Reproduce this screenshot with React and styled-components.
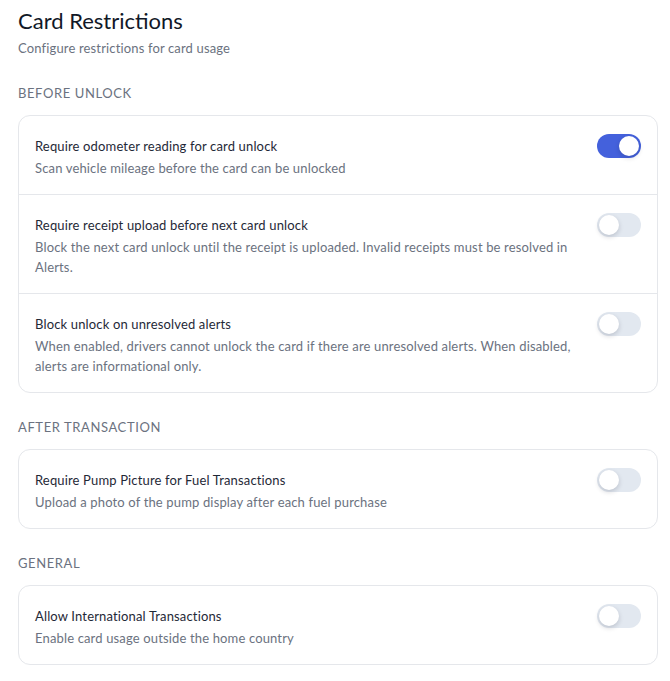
import React, { useState } from 'react';
import styled, { createGlobalStyle } from 'styled-components';

const GlobalStyle = createGlobalStyle`
  * { box-sizing: border-box; }
  body {
    margin: 0;
    background: #ffffff;
    font-family: Lato, "Noto Sans", sans-serif;
    color: #111827;
  }
`;

const Page = styled.div`
  padding: 6px 12px 16px 18px;
`;

const Title = styled.h1`
  margin: 0;
  font-size: 22px;
  line-height: 30px;
  font-weight: 400;
  color: #111827;
`;

const Subtitle = styled.p`
  margin: 2px 0 0;
  font-size: 13px;
  line-height: 20px;
  letter-spacing: 0.15px;
  color: #6b7280;
`;

const Section = styled.section`
  margin-top: 24px;
  &:first-of-type {
    margin-top: 25px;
  }
`;

const SectionLabel = styled.h2`
  margin: 0 0 12px;
  font-size: 13px;
  line-height: 20px;
  font-weight: 400;
  letter-spacing: 0.6px;
  text-transform: uppercase;
  color: #6b7280;
`;

const Card = styled.div`
  border: 1px solid #e5e7eb;
  border-radius: 12px;
  background: #ffffff;
`;

const Row = styled.div`
  display: flex;
  align-items: flex-start;
  justify-content: space-between;
  gap: 16px;
  padding: 17px 16px 16px 16px;
  & + & {
    border-top: 1px solid #e5e7eb;
  }
`;

const Text = styled.div`
  flex: 1;
  padding-top: 3px;
  letter-spacing: 0.15px;
`;

const RowTitle = styled.div`
  font-size: 13px;
  line-height: 20px;
  color: #1f2937;
`;

const RowDesc = styled.div`
  margin-top: 2px;
  font-size: 13px;
  line-height: 20px;
  color: #6b7280;
`;

const Switch = styled.button`
  flex: none;
  position: relative;
  width: 44px;
  height: 24px;
  margin-top: 1px;
  padding: 0;
  border: none;
  border-radius: 12px;
  cursor: pointer;
  background: ${({ $on }) => ($on ? '#4461dc' : '#e2e8f0')};
  &::after {
    content: '';
    position: absolute;
    top: 2px;
    left: ${({ $on }) => ($on ? '22px' : '2px')};
    width: 20px;
    height: 20px;
    border-radius: 50%;
    background: #ffffff;
    box-shadow: 0 2px 5px rgba(15, 23, 42, 0.18);
  }
`;

const sections = [
  {
    label: 'Before Unlock',
    items: [
      {
        title: 'Require odometer reading for card unlock',
        desc: 'Scan vehicle mileage before the card can be unlocked',
        on: true,
      },
      {
        title: 'Require receipt upload before next card unlock',
        desc: 'Block the next card unlock until the receipt is uploaded. Invalid receipts must be resolved in Alerts.',
      },
      {
        title: 'Block unlock on unresolved alerts',
        desc: 'When enabled, drivers cannot unlock the card if there are unresolved alerts. When disabled, alerts are informational only.',
      },
    ],
  },
  {
    label: 'After Transaction',
    items: [
      {
        title: 'Require Pump Picture for Fuel Transactions',
        desc: 'Upload a photo of the pump display after each fuel purchase',
      },
    ],
  },
  {
    label: 'General',
    items: [
      {
        title: 'Allow International Transactions',
        desc: 'Enable card usage outside the home country',
      },
    ],
  },
];

const Setting = ({ title, desc, on }) => {
  const [checked, setChecked] = useState(!!on);
  return (
    <Row>
      <Text>
        <RowTitle>{title}</RowTitle>
        <RowDesc>{desc}</RowDesc>
      </Text>
      <Switch $on={checked} onClick={() => setChecked(!checked)} aria-pressed={checked} />
    </Row>
  );
};

export default function App() {
  return (
    <>
      <GlobalStyle />
      <Page>
        <Title>Card Restrictions</Title>
        <Subtitle>Configure restrictions for card usage</Subtitle>
        {sections.map((s) => (
          <Section key={s.label}>
            <SectionLabel>{s.label}</SectionLabel>
            <Card>
              {s.items.map((it) => (
                <Setting key={it.title} {...it} />
              ))}
            </Card>
          </Section>
        ))}
      </Page>
    </>
  );
}
